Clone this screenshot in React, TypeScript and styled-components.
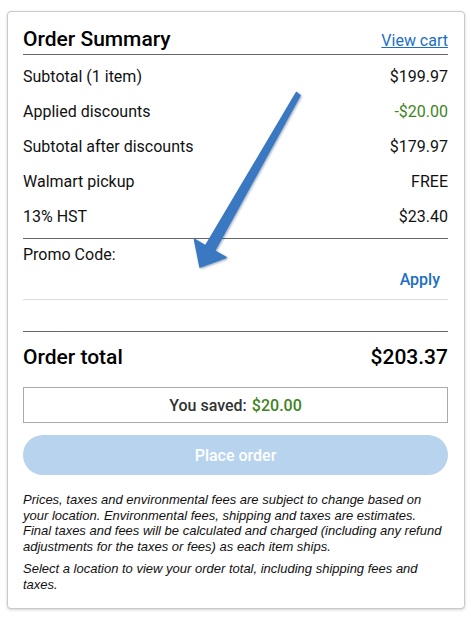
import React from 'react';
import styled, { createGlobalStyle } from 'styled-components';

const GlobalStyle = createGlobalStyle`
  body {
    margin: 0;
    background: #fff;
    font-family: Roboto, "Liberation Sans", Arial, sans-serif;
    color: #111;
  }
`;

const lines = [
  { label: 'Subtotal (1 item)', value: '$199.97' },
  { label: 'Applied discounts', value: '-$20.00', green: true },
  { label: 'Subtotal after discounts', value: '$179.97' },
  { label: 'Walmart pickup', value: 'FREE' },
  { label: '13% HST', value: '$23.40' },
];

const App = () => {
  return (
    <Page>
      <GlobalStyle />
      <Card>
        <Header>
          <Title>Order Summary</Title>
          <CartLink href="#">View cart</CartLink>
        </Header>
        <Lines>
          {lines.map((item) => (
            <Row key={item.label}>
              <span>{item.label}</span>
              <Value $green={item.green}>{item.value}</Value>
            </Row>
          ))}
        </Lines>
        <Promo>
          <PromoLabel>Promo Code:</PromoLabel>
          <ApplyRow>
            <ApplyButton>Apply</ApplyButton>
          </ApplyRow>
        </Promo>
        <TotalRow>
          <span>Order total</span>
          <span>$203.37</span>
        </TotalRow>
        <Saved>
          You saved: <Green>$20.00</Green>
        </Saved>
        <PlaceOrder disabled>Place order</PlaceOrder>
        <Note>
          Prices, taxes and environmental fees are subject to change based on
          <br />
          your location. Environmental fees, shipping and taxes are estimates.
          <br />
          Final taxes and fees will be calculated and charged (including any refund
          <br />
          adjustments for the taxes or fees) as each item ships.
        </Note>
        <Note>
          Select a location to view your order total, including shipping fees and
          <br />
          taxes.
        </Note>
      </Card>
      <Arrow viewBox="0 0 471 618">
        <defs>
          <filter id="arrowShadow" x="-20%" y="-20%" width="140%" height="140%">
            <feDropShadow dx="1" dy="1" stdDeviation="0.8" floodColor="#1c3d66" floodOpacity="0.45" />
          </filter>
        </defs>
        <polygon
          points="296.5,92.5 300,95.5 214.5,251 226,257.5 200,267 194.5,239.5 205.5,246"
          fill="#3a78c2"
          stroke="#3a78c2"
          strokeWidth="1.5"
          strokeLinejoin="round"
          filter="url(#arrowShadow)"
        />
      </Arrow>
    </Page>
  );
};

const Page = styled.div`
  position: relative;
  width: 471px;
  height: 618px;
  padding: 11px 6px 0 7px;
  box-sizing: border-box;
`;

const Card = styled.div`
  width: 458px;
  box-sizing: border-box;
  border: 1px solid #c9c9c9;
  border-radius: 4px;
  box-shadow: 0 1px 3px rgba(0, 0, 0, 0.18);
  padding: 14px 16px 16px 15px;
  background: #fff;
`;

const Header = styled.div`
  display: flex;
  justify-content: space-between;
  align-items: baseline;
  padding-bottom: 2px;
  border-bottom: 1px solid #666;
`;

const Title = styled.h2`
  margin: 0;
  font-size: 21px;
  line-height: 26px;
  font-weight: 500;
  color: #000;
`;

const CartLink = styled.a`
  font-size: 16px;
  color: #1d6fc5;
  text-decoration: underline;
`;

const Lines = styled.div`
  padding: 4px 0;
  border-bottom: 1px solid #666;
`;

const Row = styled.div`
  display: flex;
  justify-content: space-between;
  align-items: center;
  height: 35px;
  font-size: 16px;
  color: #111;
`;

const Value = styled.span<{ $green?: boolean }>`
  color: ${(p) => (p.$green ? '#3e8420' : '#111')};
`;

const Promo = styled.div`
  padding: 6px 0 9px;
  border-bottom: 1px solid #dcdcdc;
`;

const PromoLabel = styled.div`
  font-size: 16px;
  line-height: 20px;
  color: #111;
`;

const ApplyRow = styled.div`
  display: flex;
  justify-content: flex-end;
  margin-top: 5px;
  padding-right: 8px;
`;

const ApplyButton = styled.button`
  border: none;
  background: none;
  padding: 0;
  font-family: inherit;
  font-size: 16px;
  line-height: 20px;
  font-weight: 500;
  color: #1d6fc5;
`;

const TotalRow = styled.div`
  display: flex;
  justify-content: space-between;
  margin-top: 31px;
  padding-top: 12px;
  border-top: 1px solid #666;
  font-size: 21px;
  line-height: 26px;
  font-weight: 500;
  color: #000;
`;

const Saved = styled.div`
  margin-top: 17px;
  height: 36px;
  box-sizing: border-box;
  border: 1px solid #aaa;
  display: flex;
  align-items: center;
  justify-content: center;
  gap: 5px;
  font-size: 16px;
  font-weight: 500;
  color: #333;
`;

const Green = styled.span`
  color: #3e8420;
`;

const PlaceOrder = styled.button`
  display: block;
  width: 100%;
  margin-top: 12px;
  height: 40px;
  border: none;
  border-radius: 20px;
  background: #b7d3ee;
  color: #fff;
  font-family: inherit;
  font-size: 16px;
  font-weight: 500;
`;

const Note = styled.p`
  margin: 17px 0 0;
  font-family: "Liberation Sans", Arial, sans-serif;
  font-size: 13px;
  line-height: 15.5px;
  font-style: italic;
  color: #111;
  & + & {
    margin-top: 7px;
  }
`;

const Arrow = styled.svg`
  position: absolute;
  top: 0;
  left: 0;
  width: 471px;
  height: 618px;
  pointer-events: none;
`;

export default App;
